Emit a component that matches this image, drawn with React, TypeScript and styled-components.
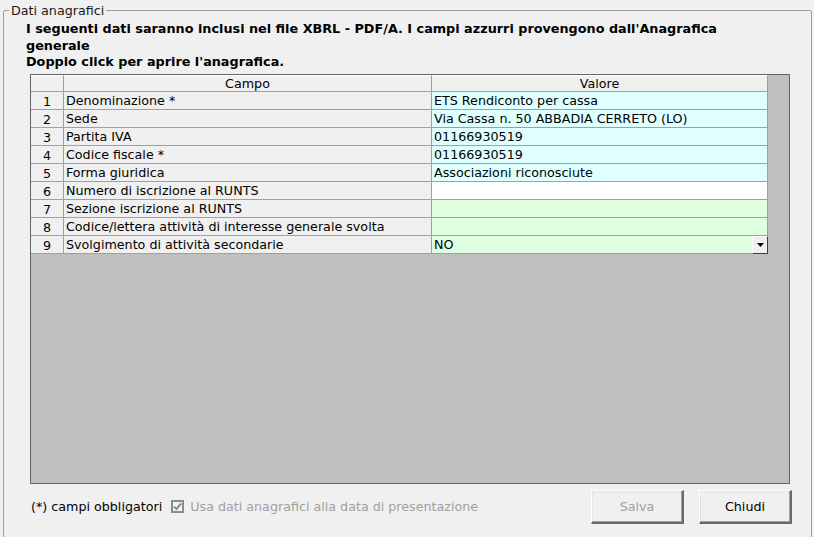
import React from 'react';
import styled, { createGlobalStyle } from 'styled-components';

const GlobalStyle = createGlobalStyle`
  html, body {
    margin: 0;
    padding: 0;
    overflow: hidden;
    background: #f0f0f0;
  }
  body {
    font-family: 'DejaVu Sans', 'Liberation Sans', sans-serif;
    font-size: 12.7px;
    color: #000000;
  }
`;

type Tint = 'anag' | 'free' | 'edit';

interface Row {
  campo: string;
  valore: string;
  tint: Tint;
  combo?: boolean;
}

const ROWS: Row[] = [
  { campo: 'Denominazione *', valore: 'ETS Rendiconto per cassa', tint: 'anag' },
  { campo: 'Sede', valore: 'Via Cassa n. 50 ABBADIA CERRETO (LO)', tint: 'anag' },
  { campo: 'Partita IVA', valore: '01166930519', tint: 'anag' },
  { campo: 'Codice fiscale *', valore: '01166930519', tint: 'anag' },
  { campo: 'Forma giuridica', valore: 'Associazioni riconosciute', tint: 'anag' },
  { campo: 'Numero di iscrizione al RUNTS', valore: '', tint: 'free' },
  { campo: 'Sezione iscrizione al RUNTS', valore: '', tint: 'edit' },
  { campo: 'Codice/lettera attività di interesse generale svolta', valore: '', tint: 'edit' },
  { campo: 'Svolgimento di attività secondarie', valore: 'NO', tint: 'edit', combo: true },
];

// azzurro = from Anagrafica, verde = editable here
const TINTS: Record<Tint, string> = {
  anag: '#e0ffff',
  free: '#ffffff',
  edit: '#e0ffe0',
};

const Frame = styled.fieldset`
  box-sizing: border-box;
  margin: 3px 2px 0 3px;
  padding: 3px 19px 0 22px;
  height: 560px;
  border: 1px solid #a0a0a0;
  border-radius: 2px;
  min-width: 0;
`;

const Legend = styled.legend`
  margin-left: -17px;
  padding: 0 2px;
  line-height: 15px;
  font-size: 12.7px;
  color: #1a1a1a;
`;

const Note = styled.div`
  font-weight: bold;
  font-size: 12.8px;
  line-height: 16.5px;
  color: #000000;
`;

const GridBox = styled.div`
  box-sizing: border-box;
  margin: 3px 0 0 4px;
  width: 760px;
  height: 410px;
  border: 1px solid #646464;
  background: #c0c0c0;
`;

const Sheet = styled.div`
  display: grid;
  grid-template-columns: 33px 368px 336px;
  grid-auto-rows: 18px;
  grid-template-rows: 17px;
  width: 737px;
`;

const HeadCell = styled.div`
  box-sizing: border-box;
  background: #f0f0f0;
  border-right: 1px solid #a0a0a0;
  border-bottom: 1px solid #a0a0a0;
  border-top: 1px solid #ffffff;
  text-align: center;
  line-height: 15px;
`;

const NumCell = styled.div`
  box-sizing: border-box;
  background: #f0f0f0;
  border-right: 1px solid #a0a0a0;
  border-bottom: 1px solid #a0a0a0;
  text-align: center;
  line-height: 18px;
  padding-top: 1px;
`;

const Cell = styled.div<{ $bg: string }>`
  position: relative;
  box-sizing: border-box;
  background: ${p => p.$bg};
  border-right: 1px solid #a0a0a0;
  border-bottom: 1px solid #a0a0a0;
  padding-left: 2px;
  line-height: 18px;
  white-space: nowrap;
`;

const ComboButton = styled.span`
  position: absolute;
  right: -1px;
  top: 0;
  box-sizing: border-box;
  width: 16px;
  height: 18px;
  background: #f0f0f0;
  border-top: 1px solid #ffffff;
  border-left: 1px solid #ffffff;
  border-right: 1px solid #404040;
  border-bottom: 1px solid #404040;
  display: flex;
  align-items: center;
  justify-content: center;
`;

const Footer = styled.div`
  display: flex;
  align-items: center;
  margin-top: 6px;
  padding-left: 5px;
  height: 34px;
`;

const Hint = styled.span`
  color: #000000;
`;

const CheckLabel = styled.label`
  display: flex;
  align-items: center;
  gap: 6px;
  margin-left: 9px;
  color: #a0a0a0;
`;

const CheckBox = styled.span`
  box-sizing: border-box;
  width: 13px;
  height: 13px;
  border: 2px solid #8c8c8c;
  background: #f4f4f4;
  display: flex;
  align-items: center;
  justify-content: center;
`;

const Buttons = styled.div`
  margin-left: auto;
  display: flex;
  gap: 15px;
`;

const WinButton = styled.button<{ $disabled?: boolean }>`
  box-sizing: border-box;
  width: 93px;
  height: 34px;
  font-family: inherit;
  font-size: 12.7px;
  color: ${p => (p.$disabled ? '#a0a0a0' : '#000000')};
  background: #f0f0f0;
  border-top: 1px solid #ffffff;
  border-left: 1px solid #ffffff;
  border-right: 2px solid #696969;
  border-bottom: 2px solid #696969;
  box-shadow: inset -1px -1px 0 #a0a0a0, inset 1px 1px 0 #e3e3e3;
  padding: 0;
  cursor: default;
`;

export default function App() {
  return (
    <>
      <GlobalStyle />
      <Frame>
        <Legend>Dati anagrafici</Legend>
        <Note>
          I seguenti dati saranno inclusi nel file XBRL - PDF/A. I campi azzurri provengono dall'Anagrafica
          <br />
          generale
          <br />
          Doppio click per aprire l'anagrafica.
        </Note>

        <GridBox>
          <Sheet>
            <HeadCell />
            <HeadCell>Campo</HeadCell>
            <HeadCell>Valore</HeadCell>
            {ROWS.map((r, i) => (
              <React.Fragment key={r.campo}>
                <NumCell>{i + 1}</NumCell>
                <Cell $bg="#f0f0f0">{r.campo}</Cell>
                <Cell $bg={TINTS[r.tint]}>
                  {r.valore}
                  {r.combo && (
                    <ComboButton>
                      <svg width="7" height="4" viewBox="0 0 7 4">
                        <path d="M0 0h7L3.5 4z" fill="#000" />
                      </svg>
                    </ComboButton>
                  )}
                </Cell>
              </React.Fragment>
            ))}
          </Sheet>
        </GridBox>

        <Footer>
          <Hint>(*) campi obbligatori</Hint>
          <CheckLabel>
            <CheckBox>
              <svg width="9" height="9" viewBox="0 0 9 9">
                <path d="M1 4.5l2.5 2.5L8 1.5" stroke="#8c8c8c" strokeWidth="2" fill="none" />
              </svg>
            </CheckBox>
            Usa dati anagrafici alla data di presentazione
          </CheckLabel>
          <Buttons>
            <WinButton $disabled>Salva</WinButton>
            <WinButton>Chiudi</WinButton>
          </Buttons>
        </Footer>
      </Frame>
    </>
  );
}
